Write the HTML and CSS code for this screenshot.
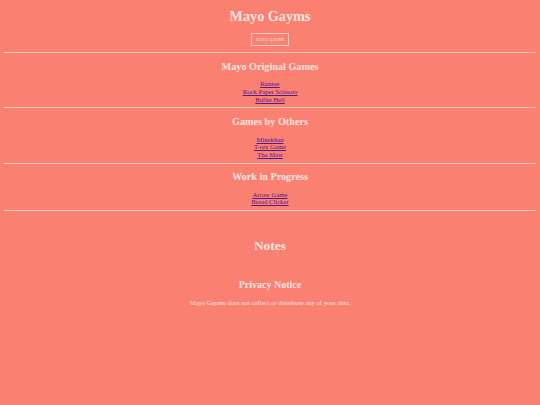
FILE: index.html
```html
<!DOCTYPE html>
<html>
<head>
<meta charset="utf-8">
<link rel="stylesheet" href="styles.css">
</head>
<body>
<header class="top">
  <h1 class="title">Mayo Gayms</h1>
  <button class="btn">mayo gayms</button>
</header>
<hr class="rule">
<section class="group">
  <h2 class="heading">Mayo Original Games</h2>
  <div class="links">
    <a href="#">Runner</a>
    <a href="#">Rock Paper Scissors</a>
    <a href="#">Bullet Hell</a>
  </div>
</section>
<hr class="rule">
<section class="group">
  <h2 class="heading">Games by Others</h2>
  <div class="links">
    <a href="#">Minekhan</a>
    <a href="#">T-rex Game</a>
    <a href="#">The Mast</a>
  </div>
</section>
<hr class="rule">
<section class="group">
  <h2 class="heading">Work in Progress</h2>
  <div class="links">
    <a href="#">Arrow Game</a>
    <a href="#">Bread Clicker</a>
  </div>
</section>
<hr class="rule">
<section class="notes">
  <h2 class="notes-title">Notes</h2>
  <h3 class="sub">Privacy Notice</h3>
  <p class="text">Mayo Gayms does not collect or distribute any of your data.</p>
</section>
</body>
</html>
```
FILE: styles.css
```css
html, body {
  background: #fa8072;
}
body {
  margin: 0;
  padding: 0 4px;
  font-family: "Liberation Serif", "Times New Roman", serif;
  color: #ffe4e0;
  text-align: center;
}
.top {
  padding-top: 7px;
  display: flex;
  flex-direction: column;
  align-items: center;
}
.title {
  margin: 0;
  font-size: 14.2px;
  line-height: 18px;
  font-weight: bold;
}
.btn {
  margin-top: 8px;
  width: 38px;
  height: 13px;
  padding: 0;
  background: transparent;
  border: 1px solid #ffc8c0;
  color: #ffd8d2;
  font-family: "Liberation Serif", "Times New Roman", serif;
  font-size: 5.6px;
  line-height: 11px;
}
.rule {
  margin: 6px 0 0;
  height: 0;
  border: 0;
  border-top: 1px solid #ffc9c2;
}
.group {
  padding: 6.5px 0 3.9px;
}
.heading {
  margin: 0;
  font-size: 10.2px;
  line-height: 13px;
  font-weight: bold;
}
.links {
  margin-top: 7.75px;
  display: flex;
  flex-direction: column;
  align-items: center;
}
.links a {
  font-size: 6.7px;
  line-height: 7.7px;
  color: #551a8b;
  text-decoration: underline;
}
.group + .rule {
  margin-top: 0;
}
.notes {
  padding-top: 26.5px;
}
.notes-title {
  margin: 0;
  font-size: 13.5px;
  line-height: 16px;
  font-weight: bold;
}
.sub {
  margin: 24px 0 0;
  font-size: 10px;
  line-height: 13px;
  font-weight: bold;
}
.text {
  margin: 8.5px 0 0;
  font-size: 6.7px;
  line-height: 8px;
}
```
